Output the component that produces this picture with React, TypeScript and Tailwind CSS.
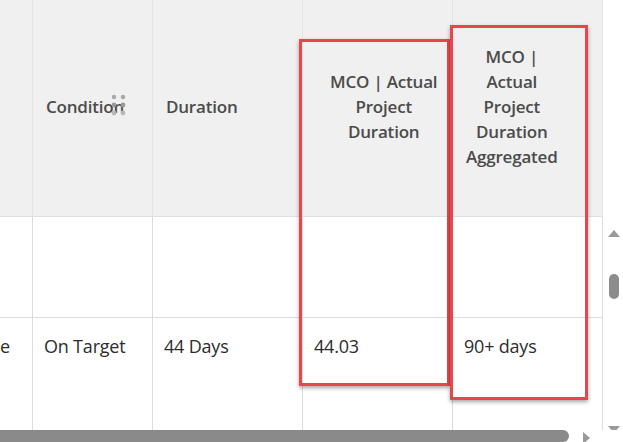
import React from "react";

const font = { fontFamily: '"Open Sans", "Liberation Sans", sans-serif' };

export default function App() {
  return (
    <div className="relative w-[623px] h-[442px] overflow-hidden bg-white" style={font}>
      <div className="flex h-[430px]">
        <div className="w-[603px] flex flex-col">
          {/* header */}
          <div className="grid grid-cols-[33px_120px_150px_150px_150px] h-[217px] bg-[#f0f0f0] border-b border-[#e1e1e1] text-[17px] font-semibold text-[#4b4b4b] leading-[25px] tracking-[-0.2px]">
            <div className="border-r border-[#e4e4e4]" />
            <div className="relative border-r border-[#e4e4e4] flex items-center pl-[13px] pb-[4px]">
              <span className="whitespace-nowrap">Condition</span>
              <svg className="absolute left-[77px] top-[93px]" width="16" height="24" viewBox="0 0 16 24">
                <circle cx="4" cy="4" r="2.2" fill="#a8a8a8" />
                <circle cx="13" cy="4" r="2.2" fill="#a8a8a8" />
                <circle cx="4" cy="12" r="2.4" fill="#9a9a9a" />
                <circle cx="13" cy="12" r="2.4" fill="#9a9a9a" />
                <circle cx="4" cy="20" r="2.4" fill="#b8b8b8" />
                <circle cx="13" cy="20" r="2.4" fill="#b8b8b8" />
              </svg>
            </div>
            <div className="border-r border-[#e4e4e4] flex items-center pl-[13px] pb-[4px]">
              <span>Duration</span>
            </div>
            <div className="border-r border-[#e4e4e4] flex items-center pl-[27px] pb-[4px]">
              <span className="text-center whitespace-nowrap">
                MCO | Actual
                <br />
                Project
                <br />
                Duration
              </span>
            </div>
            <div className="border-r border-[#e4e4e4] flex items-center pl-[13px] pb-[4px]">
              <span className="text-center whitespace-nowrap">
                MCO |
                <br />
                Actual
                <br />
                Project
                <br />
                Duration
                <br />
                Aggregated
              </span>
            </div>
          </div>
          {/* row 1 */}
          <div className="grid grid-cols-[33px_120px_150px_150px_150px] h-[101px] border-b border-[#dcdcdc]">
            <div className="border-r border-[#dcdcdc]" />
            <div className="border-r border-[#dcdcdc]" />
            <div className="border-r border-[#dcdcdc]" />
            <div className="border-r border-[#dcdcdc]" />
            <div className="border-r border-[#dcdcdc]" />
          </div>
          {/* row 2 */}
          <div className="grid grid-cols-[33px_120px_150px_150px_150px] flex-1 text-[18px] text-[#2c2c2c] tracking-[-0.2px]">
            <div className="border-r border-[#dcdcdc] pt-[15px]">
              <span>e</span>
            </div>
            <div className="border-r border-[#dcdcdc] pl-[11px] pt-[15px]">On Target</div>
            <div className="border-r border-[#dcdcdc] pl-[11px] pt-[15px]">44 Days</div>
            <div className="border-r border-[#dcdcdc] pl-[11px] pt-[15px]">44.03</div>
            <div className="border-r border-[#dcdcdc] pl-[11px] pt-[15px]">90+ days</div>
          </div>
        </div>
        {/* vertical scrollbar */}
        <div className="w-[20px] relative bg-white">
          <svg className="absolute left-[4px] top-[229px]" width="14" height="10" viewBox="0 0 14 10">
            <polygon points="7,1 13,8 1,8" fill="#9a9a9a" />
          </svg>
          <div className="absolute left-[6px] top-[274px] w-[10px] h-[25px] rounded-full bg-[#8c8c8c]" />
          <svg className="absolute left-[4px] top-[425px]" width="14" height="10" viewBox="0 0 14 10">
            <polygon points="1,1 13,1 7,8" fill="#9a9a9a" />
          </svg>
        </div>
      </div>
      {/* horizontal scrollbar */}
      <div className="relative h-[12px] bg-white">
        <div className="absolute left-0 top-0 w-[569px] h-[12px] rounded-r-full bg-[#8a8a8a]" />
        <svg className="absolute left-[582px] top-[2px]" width="10" height="12" viewBox="0 0 10 12">
          <polygon points="1,0 8,6 1,12" fill="#9a9a9a" />
        </svg>
      </div>

      {/* highlight boxes */}
      <div className="absolute left-[299px] top-[39px] w-[151px] h-[347px] border-[3px] border-[#e5474c] shadow-[0_2px_4px_rgba(0,0,0,0.35)]" />
      <div className="absolute left-[450px] top-[25px] w-[138px] h-[375px] border-[3px] border-[#e5474c] shadow-[0_2px_4px_rgba(0,0,0,0.35)]" />
    </div>
  );
}
